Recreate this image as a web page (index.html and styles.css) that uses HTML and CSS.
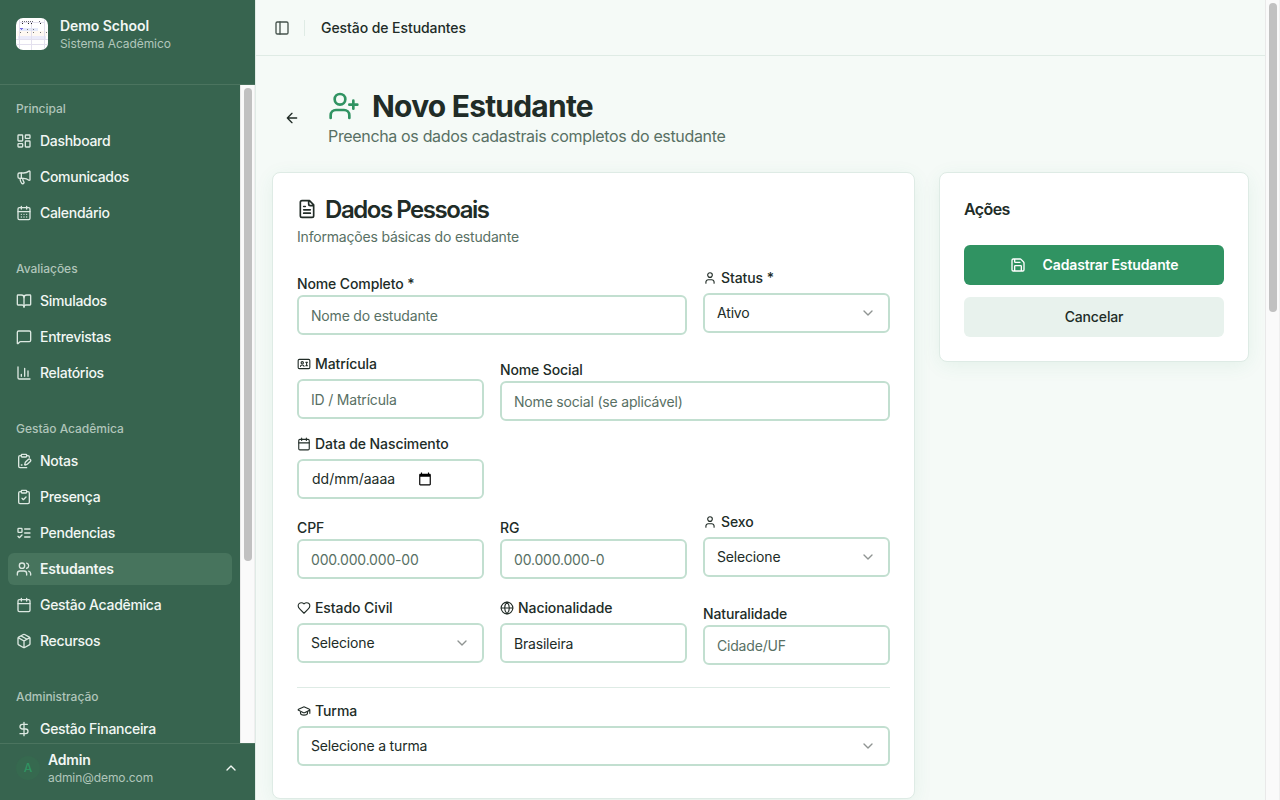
FILE: index.html
```html
<!DOCTYPE html>
<html lang="pt-BR">
<head>
<meta charset="utf-8">
<title>Gestão de Estudantes</title>
<link rel="stylesheet" href="styles.css">
</head>
<body>
<div class="app">
  <aside class="sidebar">
    <div class="brand">
      <svg class="logo" viewBox="0 0 32 32">
        <rect width="32" height="32" rx="7" fill="#fff"/>
        <path fill="#fff9f2" d="M1 13h30v5H1z"/>
        <path fill="#ebebfa" d="M2 18h28v3H2z"/>
        <path fill="#e4eafa" d="M4 10h18v3H4z"/>
        <path stroke="#e3e0ee" fill="none" d="M3.500 1v30M15.500 4v28M28.500 1v30M0 21.500h32M0 26.500h32M3 4.500h26"/>
        <path stroke="#6d6d78" stroke-dasharray="1 1" d="M6 3.500h7M14 3.500h3M23 3.500h2"/>
        <path stroke="#222" d="M6 5.500h1M12 5.500h1M15 5.500h1M24 5.500h1"/>
        <path stroke="#766bea" d="M4 10.500h3M5 11.500h1"/>
        <path stroke="#777" d="M4 14.500h1M11 14.500h1M17 14.500h1M24 14.500h1M30 14.500h1M11 11.500h1M17 11.500h1"/>
      </svg>
      <div class="brand-text"><strong>Demo School</strong><span>Sistema Acadêmico</span></div>
    </div>
    <div class="nav-wrap">
      <nav class="nav">
        <section class="group">
          <h2>Principal</h2>
          <a><svg viewBox="0 0 24 24"><rect width="7" height="9" x="3" y="3" rx="1"/><rect width="7" height="5" x="14" y="3" rx="1"/><rect width="7" height="9" x="14" y="12" rx="1"/><rect width="7" height="5" x="3" y="16" rx="1"/></svg>Dashboard</a>
          <a><svg viewBox="0 0 24 24"><path d="M11 6a13 13 0 0 0 8.400-2.800A1 1 0 0 1 21 4v12a1 1 0 0 1-1.600.8A13 13 0 0 0 11 14H5a2 2 0 0 1-2-2V8a2 2 0 0 1 2-2z"/><path d="M6 14a12 12 0 0 0 2.400 7.200 2 2 0 0 0 3.200-2.400A8 8 0 0 1 10 14"/><path d="M8 6v8"/></svg>Comunicados</a>
          <a><svg viewBox="0 0 24 24"><path d="M8 2v4M16 2v4"/><rect width="18" height="18" x="3" y="4" rx="2"/><path d="M3 10h18M8 14h.01M12 14h.01M16 14h.01M8 18h.01M12 18h.01M16 18h.01"/></svg>Calendário</a>
        </section>
        <section class="group">
          <h2>Avaliações</h2>
          <a><svg viewBox="0 0 24 24"><path d="M12 7v14"/><path d="M3 18a1 1 0 0 1-1-1V4a1 1 0 0 1 1-1h5a4 4 0 0 1 4 4 4 4 0 0 1 4-4h5a1 1 0 0 1 1 1v13a1 1 0 0 1-1 1h-6a3 3 0 0 0-3 3 3 3 0 0 0-3-3z"/></svg>Simulados</a>
          <a><svg viewBox="0 0 24 24"><path d="M22 17a2 2 0 0 1-2 2H6.828a2 2 0 0 0-1.414.586l-2.202 2.202A.71.71 0 0 1 2 21.286V5a2 2 0 0 1 2-2h16a2 2 0 0 1 2 2z"/></svg>Entrevistas</a>
          <a><svg viewBox="0 0 24 24"><path d="M3 3v16a2 2 0 0 0 2 2h16M18 17V9M13 17V5M8 17v-3"/></svg>Relatórios</a>
        </section>
        <section class="group">
          <h2>Gestão Acadêmica</h2>
          <a><svg viewBox="0 0 24 24"><rect width="8" height="4" x="8" y="2" rx="1"/><path d="M16 4h2a2 2 0 0 1 2 2v.5M16 22H6a2 2 0 0 1-2-2V6a2 2 0 0 1 2-2h2M8 18h1M21.378 12.626a1 1 0 0 0-3.004-3.004l-4.010 4.012a2 2 0 0 0-.506.854l-.837 2.870a.5.5 0 0 0 .62.62l2.870-.837a2 2 0 0 0 .854-.506z"/></svg>Notas</a>
          <a><svg viewBox="0 0 24 24"><rect width="8" height="4" x="8" y="2" rx="1"/><path d="M16 4h2a2 2 0 0 1 2 2v14a2 2 0 0 1-2 2H6a2 2 0 0 1-2-2V6a2 2 0 0 1 2-2h2M9 14l2 2 4-4"/></svg>Presença</a>
          <a><svg viewBox="0 0 24 24"><rect x="3" y="5" width="6" height="6" rx="1"/><path d="m3 17 2 2 4-4M13 6h8M13 12h8M13 18h8"/></svg>Pendencias</a>
          <a class="active"><svg viewBox="0 0 24 24"><path d="M16 21v-2a4 4 0 0 0-4-4H6a4 4 0 0 0-4 4v2"/><circle cx="9" cy="7" r="4"/><path d="M22 21v-2a4 4 0 0 0-3-3.870M16 3.130a4 4 0 0 1 0 7.750"/></svg>Estudantes</a>
          <a><svg viewBox="0 0 24 24"><path d="M8 2v4M16 2v4M3 10h18"/><rect width="18" height="18" x="3" y="4" rx="2"/></svg>Gestão Acadêmica</a>
          <a><svg viewBox="0 0 24 24"><path d="M11 21.730a2 2 0 0 0 2 0l7-4A2 2 0 0 0 21 16V8a2 2 0 0 0-1-1.730l-7-4a2 2 0 0 0-2 0l-7 4A2 2 0 0 0 3 8v8a2 2 0 0 0 1 1.730zM12 22V12M3.290 7 12 12l8.710-5M7.500 4.270l9 5.150"/></svg>Recursos</a>
        </section>
        <section class="group">
          <h2>Administração</h2>
          <a><svg viewBox="0 0 24 24"><path d="M12 2v20M17 5H9.500a3.500 3.500 0 0 0 0 7h5a3.500 3.500 0 0 1 0 7H6"/></svg>Gestão Financeira</a>
        </section>
      </nav>
      <div class="scrollbar"><div class="thumb nav-thumb"></div></div>
    </div>
    <div class="user">
      <span class="avatar">A</span>
      <div class="user-text"><strong>Admin</strong><span>admin@demo.com</span></div>
      <svg viewBox="0 0 24 24"><path d="m18 15-6-6-6 6"/></svg>
    </div>
  </aside>

  <main class="main">
    <header class="topbar">
      <svg viewBox="0 0 24 24"><rect width="18" height="18" x="3" y="3" rx="2"/><path d="M9 3v18"/></svg>
      <i class="separator"></i>
      <span>Gestão de Estudantes</span>
    </header>
    <div class="content">
      <div class="page-head">
        <span class="back"><svg viewBox="0 0 24 24"><path d="m12 19-7-7 7-7M19 12H5"/></svg></span>
        <div>
          <h1><svg viewBox="0 0 24 24"><path d="M16 21v-2a4 4 0 0 0-4-4H6a4 4 0 0 0-4 4v2"/><circle cx="9" cy="7" r="4"/><path d="M19 8v6M22 11h-6"/></svg>Novo Estudante</h1>
          <p>Preencha os dados cadastrais completos do estudante</p>
        </div>
      </div>
      <div class="columns">
        <section class="card form-card">
          <h3><svg viewBox="0 0 24 24"><path d="M15 2H6a2 2 0 0 0-2 2v16a2 2 0 0 0 2 2h12a2 2 0 0 0 2-2V7zM14 2v4a2 2 0 0 0 2 2h4M10 9H8M16 13H8M16 17H8"/></svg><span>Dados Pessoais</span></h3>
          <p class="desc">Informações básicas do estudante</p>
          <div class="fields">
            <div class="field wide select-row"><label>Nome Completo *</label><div class="input placeholder">Nome do estudante</div></div>
            <div class="field"><label class="with-icon"><svg viewBox="0 0 24 24"><path d="M19 21v-2a4 4 0 0 0-4-4H9a4 4 0 0 0-4 4v2"/><circle cx="12" cy="7" r="4"/></svg>Status *</label><div class="select">Ativo<svg viewBox="0 0 24 24"><path d="m6 9 6 6 6-6"/></svg></div></div>

            <div class="field"><label class="with-icon"><svg viewBox="0 0 24 24"><rect x="2" y="4" width="20" height="16" rx="2"/><circle cx="9" cy="10" r="2"/><path d="M6 16c0-3 6-3 6 0M15 9h3M16.500 9v6M15 15h3"/></svg>Matrícula</label><div class="input placeholder">ID / Matrícula</div></div>
            <div class="field wide"><label>Nome Social</label><div class="input placeholder">Nome social (se aplicável)</div></div>

            <div class="field full"><label class="with-icon"><svg viewBox="0 0 24 24"><path d="M8 2v4M16 2v4M3 10h18"/><rect width="18" height="18" x="3" y="4" rx="2"/></svg>Data de Nascimento</label><div class="input date">dd/mm/aaaa<svg viewBox="0 0 24 24"><path d="M20 3h-1V1h-2v2H7V1H5v2H4c-1.100 0-2 .9-2 2v16c0 1.100.9 2 2 2h16c1.100 0 2-.9 2-2V5c0-1.100-.9-2-2-2zm0 18H4V8h16v13z"/></svg></div></div>

            <div class="field select-row"><label>CPF</label><div class="input placeholder">000.000.000-00</div></div>
            <div class="field"><label>RG</label><div class="input placeholder">00.000.000-0</div></div>
            <div class="field"><label class="with-icon"><svg viewBox="0 0 24 24"><path d="M19 21v-2a4 4 0 0 0-4-4H9a4 4 0 0 0-4 4v2"/><circle cx="12" cy="7" r="4"/></svg>Sexo</label><div class="select">Selecione<svg viewBox="0 0 24 24"><path d="m6 9 6 6 6-6"/></svg></div></div>

            <div class="field select-row"><label class="with-icon"><svg viewBox="0 0 24 24"><path d="M19 14c1.490-1.460 3-3.210 3-5.500A5.500 5.500 0 0 0 16.500 3c-1.760 0-3 .5-4.500 2-1.500-1.500-2.740-2-4.500-2A5.500 5.500 0 0 0 2 8.500c0 2.300 1.500 4.050 3 5.500l7 7z"/></svg>Estado Civil</label><div class="select">Selecione<svg viewBox="0 0 24 24"><path d="m6 9 6 6 6-6"/></svg></div></div>
            <div class="field"><label class="with-icon"><svg viewBox="0 0 24 24"><circle cx="12" cy="12" r="10"/><path d="M12 2a14.500 14.500 0 0 0 0 20 14.500 14.500 0 0 0 0-20M2 12h20"/></svg>Nacionalidade</label><div class="input">Brasileira</div></div>
            <div class="field"><label>Naturalidade</label><div class="input placeholder">Cidade/UF</div></div>
          </div>
          <div class="class-row field">
            <label class="with-icon"><svg viewBox="0 0 24 24"><path d="M21.420 10.922a1 1 0 0 0-.019-1.838L12.830 5.180a2 2 0 0 0-1.660 0L2.600 9.080a1 1 0 0 0 0 1.832l8.570 3.908a2 2 0 0 0 1.660 0zM22 10v6M6 12.500V16a6 3 0 0 0 12 0v-3.500"/></svg>Turma</label>
            <div class="select">Selecione a turma<svg viewBox="0 0 24 24"><path d="m6 9 6 6 6-6"/></svg></div>
          </div>
        </section>
        <section class="card actions">
          <h4>Ações</h4>
          <div class="button primary"><svg viewBox="0 0 24 24"><path d="M15.200 3a2 2 0 0 1 1.400.6l3.800 3.800a2 2 0 0 1 .6 1.400V19a2 2 0 0 1-2 2H5a2 2 0 0 1-2-2V5a2 2 0 0 1 2-2zM17 21v-7a1 1 0 0 0-1-1H8a1 1 0 0 0-1 1v7M7 3v4a1 1 0 0 0 1 1h7"/></svg>Cadastrar Estudante</div>
          <div class="button secondary">Cancelar</div>
        </section>
      </div>
    </div>
  </main>
  <div class="scrollbar page-scrollbar"><div class="thumb page-thumb"></div></div>
</div>
</body>
</html>
```
FILE: styles.css
```css
* { box-sizing: border-box; }
body, h1, h2, h3, h4, p { margin: 0; }
body {
  height: 800px;
  overflow: hidden;
  font: 14px/20px Inter, sans-serif;
  color: #212c27;
}
svg { flex: none; fill: none; stroke: currentColor; stroke-width: 2; stroke-linecap: round; stroke-linejoin: round; width: 16px; height: 16px; }
.app { display: flex; height: 800px; background: #f5faf7; }

/* Sidebar */
.sidebar { width: 256px; flex: none; display: flex; flex-direction: column; background: #37644f; border-right: 1px solid #e0ebe6; color: #f2f7f4; }
.brand { height: 85px; flex: none; display: flex; align-items: flex-start; gap: 12px; padding: 18px 16px; border-bottom: 1px solid #4b745f; }
.logo { width: 32px; height: 32px; stroke-width: 1; stroke: none; stroke-linecap: butt; }
.brand-text, .user-text { display: flex; flex-direction: column; }
.brand-text strong { font-weight: 600; line-height: 16px; letter-spacing: -0.05px; }
.brand-text span, .user-text span { font-size: 12px; line-height: 16px; color: #b1c6bb; letter-spacing: -0.08px; }
.brand-text span { margin-top: 2px; }
.nav-wrap { flex: 1; min-height: 0; display: flex; }
.nav { flex: 1; display: flex; flex-direction: column; gap: 8px; overflow: hidden; }
.group { flex: none; display: flex; flex-direction: column; gap: 4px; padding: 8px; }
.group h2 { height: 32px; margin-bottom: -4px; padding: 0 8px; font-size: 12px; line-height: 31px; font-weight: 500; letter-spacing: -0.03px; color: #b0c5ba; }
.group a { height: 32px; display: flex; align-items: center; gap: 8px; padding: 0 8px; border-radius: 6px; font-weight: 500; letter-spacing: -0.3px; }
.group a svg { color: #dce8e1; }
.group .active { background: #47745d; font-weight: 600; letter-spacing: -0.2px; }
.scrollbar { width: 15px; flex: none; padding: 3px; background: #fafafa; border-left: 1px solid #e9e9e9; border-right: 1px solid #efefef; }
.thumb { width: 8px; border-radius: 4px; background: #c1c1c1; }
.nav-thumb { height: 473px; }
.user { height: 57px; flex: none; display: flex; align-items: center; gap: 8px; padding: 0 16px 8px; border-top: 1px solid #4b745f; }
.avatar { width: 24px; height: 24px; border-radius: 50%; background: #36694f; color: #309362; display: flex; align-items: center; justify-content: center; font-size: 12px; font-weight: 500; }
.user-text { flex: 1; padding-top: 2px; }
.user-text strong { font-weight: 600; line-height: 16px; letter-spacing: -0.2px; }
.user-text span { margin-top: 2px; }

/* Main */
.main { width: 1009px; flex: none; }
.topbar { height: 56px; display: flex; align-items: center; padding: 0 18px; border-bottom: 1px solid #dfebe5; font-weight: 500; letter-spacing: -0.07px; }
.topbar svg { color: #46534d; }
.separator { width: 1px; height: 16px; margin: 0 16px 0 14px; background: #dfebe5; }
.content { padding: 32px 16px 0; }
.page-head { height: 60px; margin-bottom: 24px; display: flex; align-items: center; gap: 16px; }
.back { width: 40px; height: 40px; display: flex; align-items: center; justify-content: center; }
h1 { display: flex; align-items: center; gap: 12px; font-size: 30px; line-height: 36px; font-weight: 700; letter-spacing: -0.79px; }
h1 svg { width: 32px; height: 32px; color: #309362; }
.page-head p { font-size: 16px; line-height: 24px; letter-spacing: -0.34px; color: #587064; }
.columns { display: grid; grid-template-columns: 643px 310px; gap: 24px; align-items: start; }
.card { background: #fff; border: 1px solid #deebe5; border-radius: 8px; padding: 24px; box-shadow: 0 4px 20px -2px rgba(48, 147, 98, 0.1); }
.form-card { height: 627px; }
h3 { display: flex; align-items: center; gap: 8px; font-size: 24px; line-height: 24px; font-weight: 600; letter-spacing: -1.45px; }
h3 span { padding-top: 1px; margin-bottom: -1px; }
h3 svg { width: 20px; height: 20px; }
.desc { margin: 6px 0 24px; letter-spacing: -0.19px; color: #587064; }
.fields { display: grid; grid-template-columns: repeat(3, 187px); gap: 16px; }
.wide { grid-column: span 2; }
.full { grid-column: 1 / -1; }
.full .input { width: 187px; }
.select-row { padding-bottom: 6px; min-height: 70px; }
label { display: block; height: 24px; line-height: 26px; font-weight: 500; letter-spacing: -0.12px; }
.with-icon { display: flex; align-items: center; gap: 4px; height: 14px; line-height: 14px; margin-bottom: 8px; letter-spacing: -0.08px; }
.with-icon svg { width: 14px; height: 14px; stroke-width: 1.9; }
.input, .select { height: 40px; display: flex; align-items: center; border: 2px solid #c2dfd0; border-radius: 6px; padding: 0 12px; background: #fff; letter-spacing: -0.19px; }
.input { padding-top: 2px; }
.placeholder { color: #587064; }
.select { justify-content: space-between; letter-spacing: -0.17px; }
.select svg { opacity: 0.5; }
.date { padding: 0 13px; gap: 23px; letter-spacing: 0; }
.date svg { width: 14px; height: 14px; fill: #000; stroke: none; }
.class-row { margin-top: 16px; padding-top: 16px; border-top: 1px solid #deebe5; }
.actions { height: 190px; }
h4 { font-size: 16px; line-height: 24px; font-weight: 600; letter-spacing: -0.6px; margin-bottom: 24px; }
.button { height: 40px; display: flex; align-items: center; justify-content: center; border-radius: 6px; font-weight: 500; letter-spacing: -0.14px; }
.primary { gap: 17px; background: #309362; color: #fff; font-weight: 600; margin-bottom: 12px; }
.secondary { background: #e8f2ed; }
.page-thumb { height: 309px; }
```
